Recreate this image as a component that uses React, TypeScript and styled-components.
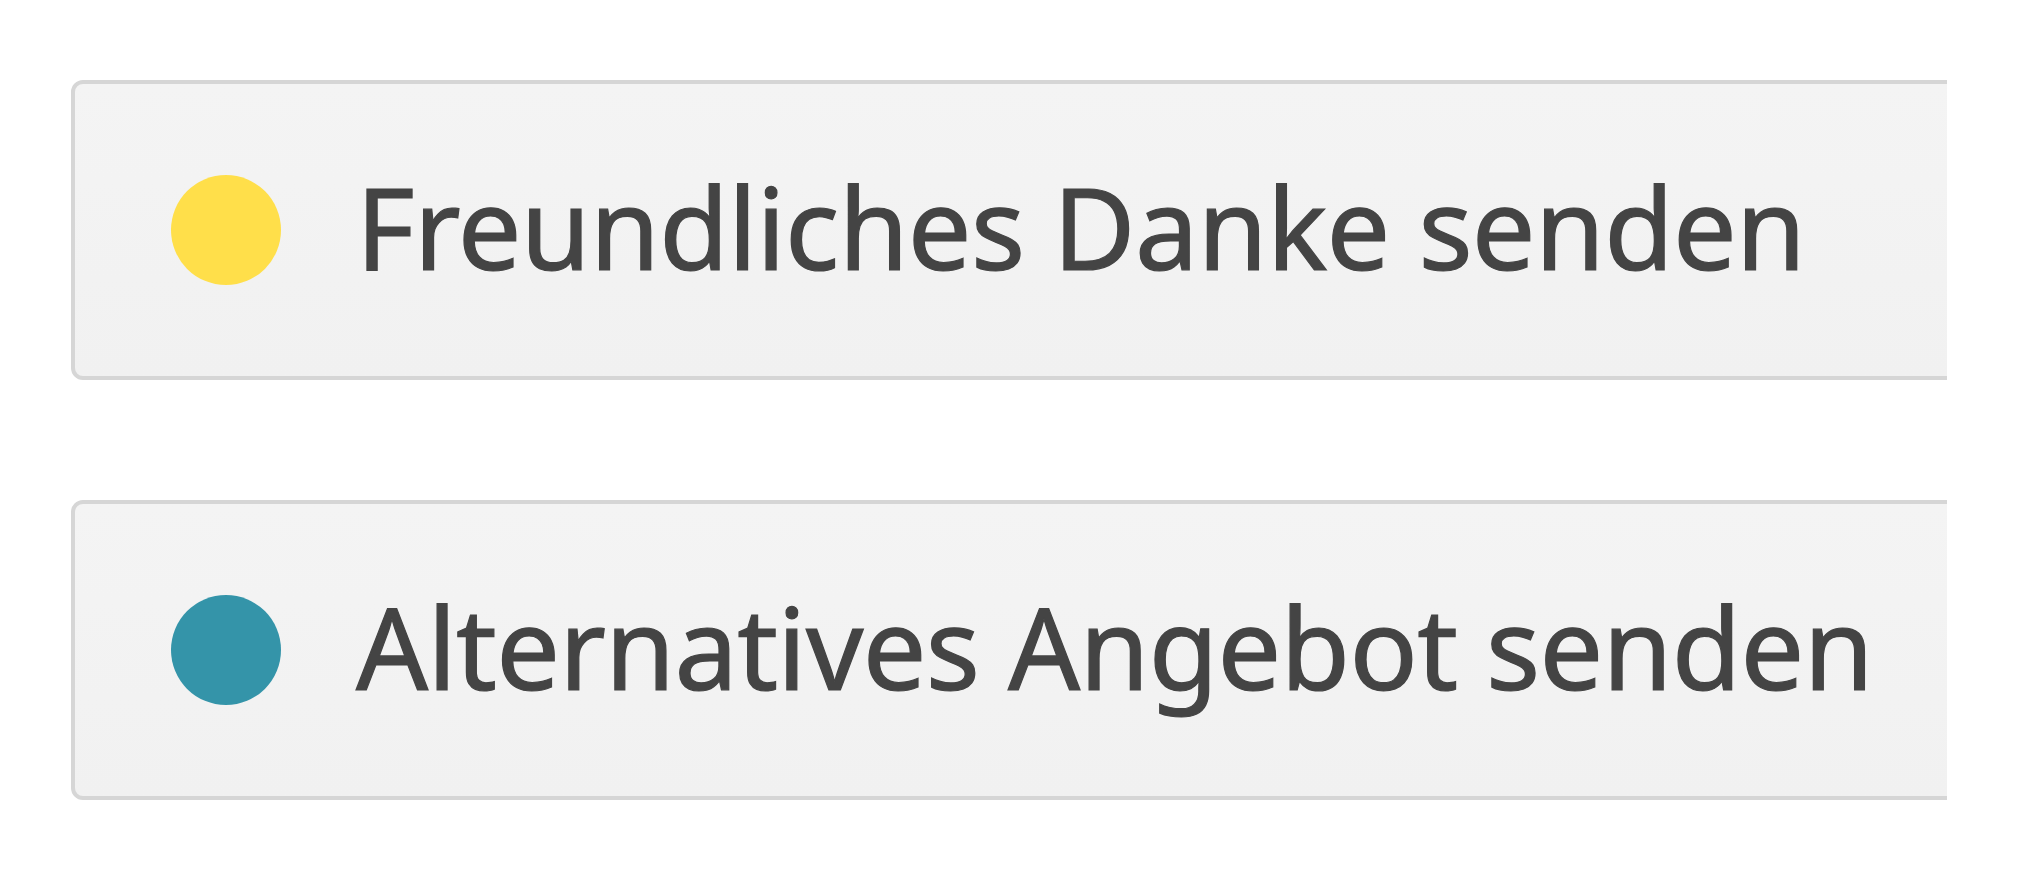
import React from 'react';
import styled, {createGlobalStyle} from 'styled-components'

const GlobalStyle = createGlobalStyle`
    html, body {
        margin: 0;
        padding: 0;
        background: #ffffff;
    }
`

type Action = {
    label: string,
    color: string,
}

const actions: Action[] = [
    {label: "Freundliches Danke senden", color: "#ffdf4a"},
    {label: "Alternatives Angebot senden", color: "#3494a9"},
]

const Page = styled.div`
    width: 1947px;
    height: 880px;
    overflow: hidden;
    padding: 80px 0 0 71px;
    box-sizing: border-box;
    display: flex;
    flex-direction: column;
    gap: 120px;
`

const ActionButton = styled.button`
    width: 1960px;
    height: 300px;
    flex: none;
    box-sizing: border-box;
    display: flex;
    align-items: center;
    gap: 75px;
    padding: 0 0 0 96px;
    border: 4px solid #d6d6d6;
    border-radius: 12px;
    background: linear-gradient(#f4f4f4, #f1f1f1);
    font-family: "Noto Sans", "Open Sans", sans-serif;
    font-size: 113px;
    letter-spacing: -0.65px;
    color: #444444;
    -webkit-text-stroke: 1.2px #444444;
    text-align: left;
    cursor: pointer;
`

const Dot = styled.span<{$color: string}>`
    width: 110px;
    height: 110px;
    flex: none;
    border-radius: 50%;
    background: ${p => p.$color};
`

const Label = styled.span`
    white-space: nowrap;
    line-height: 1;
    padding-bottom: 7px;
`

export default function App(){
    return (
        <>
            <GlobalStyle/>
            <Page>
                {actions.map(a => (
                    <ActionButton key={a.label}>
                        <Dot $color={a.color}/>
                        <Label>{a.label}</Label>
                    </ActionButton>
                ))}
            </Page>
        </>
    )
}
